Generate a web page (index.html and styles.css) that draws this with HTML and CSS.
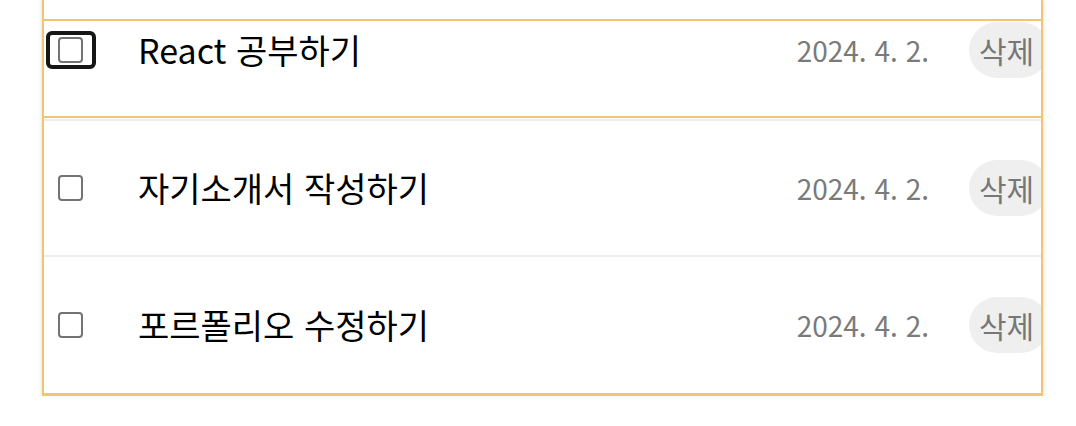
FILE: index.html
```html
<!DOCTYPE html>
<html lang="ko">
<head>
<meta charset="utf-8">
<title>Todo</title>
<link rel="stylesheet" href="styles.css">
</head>
<body>
<div class="list">
  <div class="spacer"></div>
  <div class="item focused">
    <span class="check-wrap"><span class="check"></span></span>
    <span class="content">React 공부하기</span>
    <span class="date">2024. 4. 2.</span>
    <button class="del">삭제</button>
  </div>
  <div class="item">
    <span class="check-wrap"><span class="check"></span></span>
    <span class="content">자기소개서 작성하기</span>
    <span class="date">2024. 4. 2.</span>
    <button class="del">삭제</button>
  </div>
  <div class="item last">
    <span class="check-wrap"><span class="check"></span></span>
    <span class="content">포르폴리오 수정하기</span>
    <span class="date">2024. 4. 2.</span>
    <button class="del">삭제</button>
  </div>
</div>
</body>
</html>
```

FILE: styles.css
```css
html, body {
  margin: 0;
  padding: 0;
  background: #ffffff;
}

body {
  font-family: "Noto Sans CJK KR", "Noto Sans", sans-serif;
}

.list {
  margin-left: 42px;
  width: 997px;
  height: 393px;
  border-left: 2px solid #f0c672;
  border-right: 2px solid #f0c672;
  border-bottom: 3px solid #f0c672;
  box-shadow: 0 0 4px rgba(0, 0, 0, 0.16);
  overflow: hidden;
  background: #ffffff;
}

.spacer {
  height: 19px;
}

.item {
  display: flex;
  align-items: center;
  height: 57px;
  padding: 38px 0 39px;
  border-top: 2px solid #eeeeee;
}

.item.focused {
  padding: 0 0 38px;
  border-top: 2px solid #f0c672;
  border-bottom: 2px solid #f0c672;
  margin-bottom: 1px;
}

.item.last {
  padding: 39px 0 40px;
}

.check-wrap {
  box-sizing: border-box;
  width: 50px;
  height: 38px;
  margin-left: 2px;
  padding-left: 8px;
  display: flex;
  align-items: center;
  border: 4px solid transparent;
  border-radius: 6px;
  flex-shrink: 0;
}

.focused .check-wrap {
  border-color: #161616;
}

.check {
  box-sizing: border-box;
  display: block;
  width: 25px;
  height: 26px;
  border: 2px solid #737373;
  border-radius: 4px;
  background: #ffffff;
}

.content {
  flex: 1;
  min-width: 0;
  margin-left: 42px;
  font-size: 34px;
  color: #000000;
  white-space: nowrap;
}

.date {
  flex-shrink: 0;
  font-size: 28px;
  color: #7a7a7a;
  white-space: nowrap;
}

.del {
  flex-shrink: 0;
  margin-left: 40px;
  margin-right: -8px;
  width: 80px;
  height: 56px;
  padding: 0 0 0 10px;
  text-align: left;
  border: none;
  border-radius: 28px;
  background: #efefef;
  color: #777777;
  font-family: "Noto Sans CJK KR", sans-serif;
  font-size: 30px;
  white-space: nowrap;
}
```
